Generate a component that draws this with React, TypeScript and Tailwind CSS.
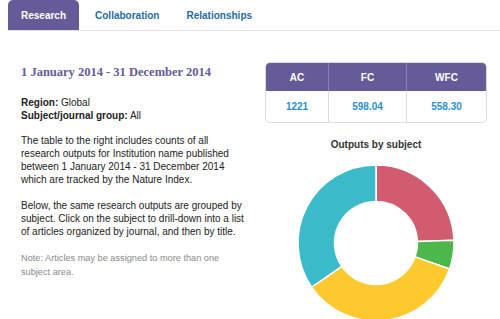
import React from 'react';

const segments = [
  { from: 0, to: 88, color: '#d25c6f' },
  { from: 88, to: 109.5, color: '#4cb74a' },
  { from: 109.5, to: 235.6, color: '#fec92e' },
  { from: 235.6, to: 360, color: '#3bbac9' },
];

function arcPath(cx: number, cy: number, r1: number, r2: number, a1: number, a2: number) {
  const p = (r: number, a: number) => {
    const rad = ((a - 90) * Math.PI) / 180;
    return `${(cx + r * Math.cos(rad)).toFixed(2)} ${(cy + r * Math.sin(rad)).toFixed(2)}`;
  };
  const large = a2 - a1 > 180 ? 1 : 0;
  return `M ${p(r2, a1)} A ${r2} ${r2} 0 ${large} 1 ${p(r2, a2)} L ${p(r1, a2)} A ${r1} ${r1} 0 ${large} 0 ${p(r1, a1)} Z`;
}

function Donut() {
  return (
    <svg width="160" height="160" viewBox="0 0 160 160">
      {segments.map((s) => (
        <path
          key={s.color}
          d={arcPath(80, 80, 41.5, 78, s.from, s.to)}
          fill={s.color}
          stroke="#ffffff"
          strokeWidth="1.5"
        />
      ))}
    </svg>
  );
}

export default function App() {
  return (
    <div className="w-[500px] h-[319px] overflow-hidden bg-white font-['Liberation_Sans',Arial,sans-serif] text-[#222]">
      <div className="flex ml-2 border-b border-[#e3e3e3] h-[31px] text-[10px] font-bold">
        <div className="flex items-center px-[13px] rounded-t-[5px] bg-[#675a98] text-white">Research</div>
        <div className="flex items-center px-[16px] text-[#1f6c9e]">Collaboration</div>
        <div className="flex items-center px-[11px] text-[#1f6c9e]">Relationships</div>
      </div>

      <div className="flex pl-[21px] pt-[32px]">
        <div className="w-[228px] text-[10px] leading-[13.3px]">
          <h1 className="mt-[1px] font-['Liberation_Serif','Times_New_Roman',serif] font-bold text-[12.5px] leading-[16px] text-[#675a98]">
            1 January 2014 - 31 December 2014
          </h1>
          <p className="mt-[16px]">
            <span className="font-bold">Region:</span> Global
            <br />
            <span className="font-bold">Subject/journal group:</span> All
          </p>
          <p className="mt-[11px]">
            The table to the right includes counts of all research outputs for Institution name
            published between 1 January 2014 - 31 December 2014 which are tracked by the Nature Index.
          </p>
          <p className="mt-[12px]">
            Below, the same research outputs are grouped by subject. Click on the subject to
            drill-down into a list of articles organized by journal, and then by title.
          </p>
          <p className="mt-[12px] text-[9.2px] leading-[14px] text-[#8a8a8a]">
            Note: Articles may be assigned to more than one subject area.
          </p>
        </div>

        <div className="ml-[16px] flex flex-col items-center">
          <div className="-mt-[1px] w-[222px] border border-[#dcdcdc] rounded-[5px] overflow-hidden text-[10px] font-bold">
            <div className="flex h-[28px] bg-[#675a98] text-white">
              <div className="w-[63px] flex items-center justify-center border-r border-[#8a7fb4]">AC</div>
              <div className="w-[78px] flex items-center justify-center border-r border-[#8a7fb4]">FC</div>
              <div className="flex-1 flex items-center justify-center">WFC</div>
            </div>
            <div className="flex h-[31px] text-[#2b8fcf]">
              <div className="w-[63px] flex items-center justify-center border-r border-[#dcdcdc]">1221</div>
              <div className="w-[78px] flex items-center justify-center border-r border-[#dcdcdc]">598.04</div>
              <div className="flex-1 flex items-center justify-center">558.30</div>
            </div>
          </div>
          <div className="mt-[15px] text-[10px] leading-[13px] font-bold text-[#333]">Outputs by subject</div>
          <div className="mt-[12px]">
            <Donut />
          </div>
        </div>
      </div>
    </div>
  );
}
